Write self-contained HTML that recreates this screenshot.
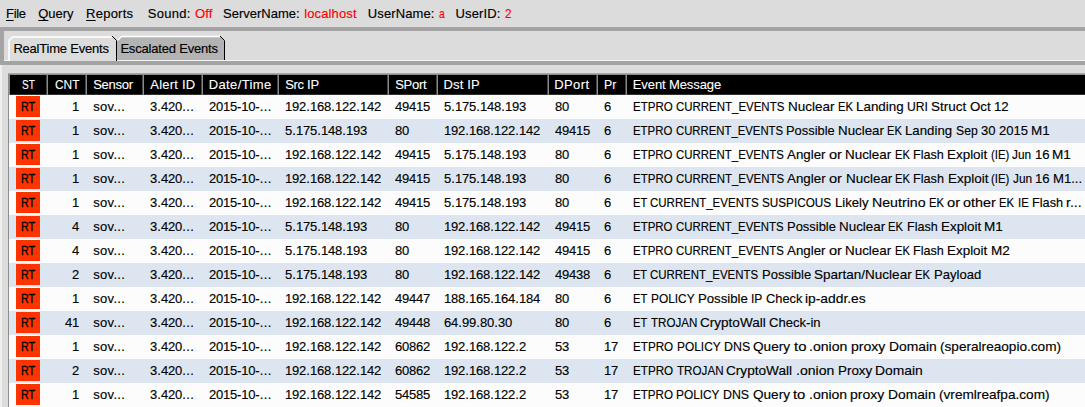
<!DOCTYPE html>
<html><head><meta charset="utf-8"><style>
html,body{margin:0;padding:0;width:1085px;height:407px;overflow:hidden;background:#dcdcdc;position:relative;font-family:"Liberation Sans", sans-serif;font-size:13px;}
.t{position:absolute;white-space:pre;line-height:15px;-webkit-text-stroke:0.15px currentColor;}
.t u{text-decoration:underline;text-underline-offset:2px;}
.n i{font-style:normal;display:inline-block;text-align:center;} .n .d{width:7px} .n .p{width:4px} .n .h{width:4.3px}
.band{position:absolute;background:#a3a3a3;}
.row{position:absolute;left:9px;width:1076px;height:24px;}
.rt{position:absolute;left:16px;width:24px;height:21px;background:#ff3300;}
.sep{position:absolute;top:75px;width:2px;height:20px;background:linear-gradient(90deg,#484848 50%,#8a8a8a 50%);}
</style></head><body>
<div class="band" style="left:0;top:27px;width:1085px;height:4px"></div>
<div class="band" style="left:0;top:27px;width:4px;height:38px"></div>
<div class="band" style="left:0;top:61px;width:1085px;height:4px"></div>
<div style="position:absolute;left:0;top:65px;width:2px;height:342px;background:#eeeeee"></div>
<div style="position:absolute;left:4px;top:60px;width:1081px;height:1px;background:#f4f4f4"></div>
<svg style="position:absolute;left:0;top:0" width="240" height="62">
  <path d="M8,61 V40 L12,36 H112 L116,40 V61 Z" fill="#dcdcdc"/>
  <path d="M9,61 V40.5 L12.5,37 H111.5" fill="none" stroke="#f8f8f8" stroke-width="2"/>
  <path d="M112,36 L116.5,40.5 V61" fill="none" stroke="#000" stroke-width="1"/>
  <path d="M117,60 V40 L121,36 H220 L224,40 V60 Z" fill="#b3b3b3"/>
  <path d="M117.5,40.5 L121.5,36.5 H220" fill="none" stroke="#ffffff" stroke-width="1.3"/>
  <path d="M220,36 L224.5,40.5 V60" fill="none" stroke="#000" stroke-width="1"/>
</svg>
<!-- table frame -->
<div style="position:absolute;left:8px;top:73px;width:1077px;height:334px;background:#8c8c8c"></div>
<div style="position:absolute;left:8px;top:73px;width:1077px;height:1px;background:#a8a8a8"></div>
<div style="position:absolute;left:10px;top:75px;width:1075px;height:20px;background:linear-gradient(#000 19px,#303030 19px)"></div>
<div class="sep" style="left:46px"></div><div class="sep" style="left:85px"></div><div class="sep" style="left:142px"></div><div class="sep" style="left:201px"></div><div class="sep" style="left:277px"></div><div class="sep" style="left:387px"></div><div class="sep" style="left:436px"></div><div class="sep" style="left:547px"></div><div class="sep" style="left:596px"></div><div class="sep" style="left:625px"></div>
<div class="row" style="top:95px;background:#fcfcfc"></div><div class="row" style="top:95px;height:1px;background:#fff"></div><div class="rt" style="top:96px"></div><div class="row" style="top:119px;background:#dde6f0"></div><div class="rt" style="top:120px"></div><div class="row" style="top:143px;background:#fcfcfc"></div><div class="rt" style="top:144px"></div><div class="row" style="top:167px;background:#dde6f0"></div><div class="rt" style="top:168px"></div><div class="row" style="top:191px;background:#fcfcfc"></div><div class="rt" style="top:192px"></div><div class="row" style="top:215px;background:#dde6f0"></div><div class="rt" style="top:216px"></div><div class="row" style="top:239px;background:#fcfcfc"></div><div class="rt" style="top:240px"></div><div class="row" style="top:263px;background:#dde6f0"></div><div class="rt" style="top:264px"></div><div class="row" style="top:287px;background:#fcfcfc"></div><div class="rt" style="top:288px"></div><div class="row" style="top:311px;background:#dde6f0"></div><div class="rt" style="top:312px"></div><div class="row" style="top:335px;background:#fcfcfc"></div><div class="rt" style="top:336px"></div><div class="row" style="top:359px;background:#dde6f0"></div><div class="rt" style="top:360px"></div><div class="row" style="top:383px;background:#fcfcfc"></div><div class="rt" style="top:384px"></div>
<div class="t" style="top:6px;color:#000;letter-spacing:-0.306px;left:6.00px;"><u>F</u>ile</div><div class="t" style="top:6px;color:#000;letter-spacing:-0.050px;left:38.30px;"><u>Q</u>uery</div><div class="t" style="top:6px;color:#000;letter-spacing:0.230px;left:86.10px;"><u>R</u>eports</div><div class="t" style="top:6px;color:#000;letter-spacing:0.282px;left:147.70px;">Sound:</div><div class="t" style="top:6px;color:#ff0000;left:195.20px;transform:scaleX(1.0121);transform-origin:0 0;">Off</div><div class="t" style="top:6px;color:#000;letter-spacing:-0.007px;left:223.10px;">ServerName:</div><div class="t" style="top:6px;color:#ff0000;letter-spacing:0.125px;left:304.20px;">localhost</div><div class="t" style="top:6px;color:#000;letter-spacing:0.091px;left:367.85px;">UserName:</div><div class="t" style="top:6px;color:#ff0000;left:438.90px;transform:scaleX(0.8000);transform-origin:0 0;">a</div><div class="t" style="top:6px;color:#000;letter-spacing:0.125px;left:455.60px;">UserID:</div><div class="t" style="top:6px;color:#ff0000;left:505.30px;transform:scaleX(0.9000);transform-origin:0 0;">2</div><div class="t" style="top:41px;color:#000;letter-spacing:-0.214px;left:13.40px;">RealTime Events</div><div class="t" style="top:41px;color:#000;letter-spacing:-0.190px;left:120.40px;">Escalated Events</div><div class="t" style="top:77px;color:#fff;-webkit-text-stroke:0.1px #fff;left:21.50px;transform:scaleX(0.7798);transform-origin:0 0;">ST</div><div class="t" style="top:77px;color:#fff;-webkit-text-stroke:0.1px #fff;left:54.50px;transform:scaleX(0.9150);transform-origin:0 0;">CNT</div><div class="t" style="top:77px;color:#fff;-webkit-text-stroke:0.1px #fff;letter-spacing:-0.252px;left:93.20px;">Sensor</div><div class="t" style="top:77px;color:#fff;-webkit-text-stroke:0.1px #fff;letter-spacing:0.221px;left:150.30px;">Alert ID</div><div class="t" style="top:77px;color:#fff;-webkit-text-stroke:0.1px #fff;letter-spacing:0.382px;left:208.70px;">Date/Time</div><div class="t" style="top:77px;color:#fff;-webkit-text-stroke:0.1px #fff;letter-spacing:-0.305px;left:285.20px;">Src IP</div><div class="t" style="top:77px;color:#fff;-webkit-text-stroke:0.1px #fff;letter-spacing:-0.250px;left:395.20px;">SPort</div><div class="t" style="top:77px;color:#fff;-webkit-text-stroke:0.1px #fff;letter-spacing:0.155px;left:443.50px;">Dst IP</div><div class="t" style="top:77px;color:#fff;-webkit-text-stroke:0.1px #fff;letter-spacing:0.395px;left:554.20px;">DPort</div><div class="t" style="top:77px;color:#fff;-webkit-text-stroke:0.1px #fff;left:603.65px;transform:scaleX(0.9471);transform-origin:0 0;">Pr</div><div class="t" style="top:77px;color:#fff;-webkit-text-stroke:0.1px #fff;letter-spacing:-0.106px;left:632.80px;">Event Message</div><div class="t" style="top:99px;color:#000;-webkit-text-stroke:0.3px #000;left:21.48px;transform:scaleX(0.8234);transform-origin:0 0;">RT</div><div class="t" style="top:99px;color:#000;letter-spacing:0.282px;left:93.30px;">sov...</div><div class="t" style="top:99px;left:633.00px;transform:scaleX(0.8875);transform-origin:0 0">ETPRO</div><div class="t" style="top:99px;left:676.08px;transform:scaleX(0.8820);transform-origin:0 0">CURRENT_EVENTS</div><div class="t" style="top:99px;left:787.72px;transform:scaleX(1.0372);transform-origin:0 0">Nuclear</div><div class="t" style="top:99px;left:837.51px;transform:scaleX(0.8654);transform-origin:0 0">EK</div><div class="t" style="top:99px;left:855.85px;transform:scaleX(1.0298);transform-origin:0 0">Landing</div><div class="t" style="top:99px;left:906.83px;transform:scaleX(0.9333);transform-origin:0 0">URI</div><div class="t" style="top:99px;left:931.06px;transform:scaleX(1.0363);transform-origin:0 0">Struct</div><div class="t" style="top:99px;left:969.57px;transform:scaleX(1.0198);transform-origin:0 0">Oct</div><div class="t" style="top:99px;left:993.53px;transform:scaleX(1.0144);transform-origin:0 0">12</div><div class="t" style="top:123px;color:#000;-webkit-text-stroke:0.3px #000;left:21.48px;transform:scaleX(0.8234);transform-origin:0 0;">RT</div><div class="t" style="top:123px;color:#000;letter-spacing:0.282px;left:93.30px;">sov...</div><div class="t" style="top:123px;left:633.00px;transform:scaleX(0.8774);transform-origin:0 0">ETPRO</div><div class="t" style="top:123px;left:675.59px;transform:scaleX(0.8720);transform-origin:0 0">CURRENT_EVENTS</div><div class="t" style="top:123px;left:785.96px;transform:scaleX(0.9910);transform-origin:0 0">Possible</div><div class="t" style="top:123px;left:837.94px;transform:scaleX(1.0254);transform-origin:0 0">Nuclear</div><div class="t" style="top:123px;left:887.17px;transform:scaleX(0.8555);transform-origin:0 0">EK</div><div class="t" style="top:123px;left:905.30px;transform:scaleX(1.0180);transform-origin:0 0">Landing</div><div class="t" style="top:123px;left:955.69px;transform:scaleX(0.9390);transform-origin:0 0">Sep</div><div class="t" style="top:123px;left:980.71px;transform:scaleX(1.0029);transform-origin:0 0">30</div><div class="t" style="top:123px;left:998.50px;transform:scaleX(1.0029);transform-origin:0 0">2015</div><div class="t" style="top:123px;left:1030.80px;transform:scaleX(1.0355);transform-origin:0 0">M1</div><div class="t" style="top:147px;color:#000;-webkit-text-stroke:0.3px #000;left:21.48px;transform:scaleX(0.8234);transform-origin:0 0;">RT</div><div class="t" style="top:147px;color:#000;letter-spacing:0.282px;left:93.30px;">sov...</div><div class="t" style="top:147px;left:633.00px;transform:scaleX(0.8833);transform-origin:0 0">ETPRO</div><div class="t" style="top:147px;left:675.87px;transform:scaleX(0.8778);transform-origin:0 0">CURRENT_EVENTS</div><div class="t" style="top:147px;left:786.98px;transform:scaleX(1.0248);transform-origin:0 0">Angler</div><div class="t" style="top:147px;left:828.81px;transform:scaleX(1.1179);transform-origin:0 0">or</div><div class="t" style="top:147px;left:845.04px;transform:scaleX(1.0322);transform-origin:0 0">Nuclear</div><div class="t" style="top:147px;left:894.60px;transform:scaleX(0.8612);transform-origin:0 0">EK</div><div class="t" style="top:147px;left:912.85px;transform:scaleX(0.9702);transform-origin:0 0">Flash</div><div class="t" style="top:147px;left:947.01px;transform:scaleX(1.0325);transform-origin:0 0">Exploit</div><div class="t" style="top:147px;left:990.61px;transform:scaleX(0.8710);transform-origin:0 0">(IE)</div><div class="t" style="top:147px;left:1012.16px;transform:scaleX(0.9103);transform-origin:0 0">Jun</div><div class="t" style="top:147px;left:1034.56px;transform:scaleX(1.0096);transform-origin:0 0">16</div><div class="t" style="top:147px;left:1052.48px;transform:scaleX(1.0424);transform-origin:0 0">M1</div><div class="t" style="top:171px;color:#000;-webkit-text-stroke:0.3px #000;left:21.48px;transform:scaleX(0.8234);transform-origin:0 0;">RT</div><div class="t" style="top:171px;color:#000;letter-spacing:0.282px;left:93.30px;">sov...</div><div class="t" style="top:171px;left:633.00px;transform:scaleX(0.8853);transform-origin:0 0">ETPRO</div><div class="t" style="top:171px;left:675.97px;transform:scaleX(0.8798);transform-origin:0 0">CURRENT_EVENTS</div><div class="t" style="top:171px;left:787.33px;transform:scaleX(1.0271);transform-origin:0 0">Angler</div><div class="t" style="top:171px;left:829.25px;transform:scaleX(1.1204);transform-origin:0 0">or</div><div class="t" style="top:171px;left:845.52px;transform:scaleX(1.0345);transform-origin:0 0">Nuclear</div><div class="t" style="top:171px;left:895.19px;transform:scaleX(0.8631);transform-origin:0 0">EK</div><div class="t" style="top:171px;left:913.48px;transform:scaleX(0.9724);transform-origin:0 0">Flash</div><div class="t" style="top:171px;left:947.71px;transform:scaleX(1.0348);transform-origin:0 0">Exploit</div><div class="t" style="top:171px;left:991.41px;transform:scaleX(0.8729);transform-origin:0 0">(IE)</div><div class="t" style="top:171px;left:1013.02px;transform:scaleX(0.9124);transform-origin:0 0">Jun</div><div class="t" style="top:171px;left:1035.46px;transform:scaleX(1.0118);transform-origin:0 0">16</div><div class="t" style="top:171px;left:1053.42px;transform:scaleX(1.0065);transform-origin:0 0">M1...</div><div class="t" style="top:195px;color:#000;-webkit-text-stroke:0.3px #000;left:21.48px;transform:scaleX(0.8234);transform-origin:0 0;">RT</div><div class="t" style="top:195px;color:#000;letter-spacing:0.282px;left:93.30px;">sov...</div><div class="t" style="top:195px;left:633.00px;transform:scaleX(0.8516);transform-origin:0 0">ET</div><div class="t" style="top:195px;left:650.49px;transform:scaleX(0.8846);transform-origin:0 0">CURRENT_EVENTS</div><div class="t" style="top:195px;left:762.46px;transform:scaleX(0.9025);transform-origin:0 0">SUSPICOUS</div><div class="t" style="top:195px;left:834.91px;transform:scaleX(1.0106);transform-origin:0 0">Likely</div><div class="t" style="top:195px;left:871.84px;transform:scaleX(1.0893);transform-origin:0 0">Neutrino</div><div class="t" style="top:195px;left:928.70px;transform:scaleX(0.8679);transform-origin:0 0">EK</div><div class="t" style="top:195px;left:947.10px;transform:scaleX(1.1265);transform-origin:0 0">or</div><div class="t" style="top:195px;left:963.46px;transform:scaleX(1.1028);transform-origin:0 0">other</div><div class="t" style="top:195px;left:999.48px;transform:scaleX(0.8679);transform-origin:0 0">EK</div><div class="t" style="top:195px;left:1017.87px;transform:scaleX(0.8745);transform-origin:0 0">IE</div><div class="t" style="top:195px;left:1031.95px;transform:scaleX(0.9777);transform-origin:0 0">Flash</div><div class="t" style="top:195px;left:1066.38px;transform:scaleX(1.0744);transform-origin:0 0">r...</div><div class="t" style="top:219px;color:#000;-webkit-text-stroke:0.3px #000;left:21.48px;transform:scaleX(0.8234);transform-origin:0 0;">RT</div><div class="t" style="top:219px;color:#000;letter-spacing:0.282px;left:93.30px;">sov...</div><div class="t" style="top:219px;left:633.00px;transform:scaleX(0.8819);transform-origin:0 0">ETPRO</div><div class="t" style="top:219px;left:675.80px;transform:scaleX(0.8764);transform-origin:0 0">CURRENT_EVENTS</div><div class="t" style="top:219px;left:786.73px;transform:scaleX(0.9960);transform-origin:0 0">Possible</div><div class="t" style="top:219px;left:838.98px;transform:scaleX(1.0305);transform-origin:0 0">Nuclear</div><div class="t" style="top:219px;left:888.45px;transform:scaleX(0.8598);transform-origin:0 0">EK</div><div class="t" style="top:219px;left:906.67px;transform:scaleX(0.9686);transform-origin:0 0">Flash</div><div class="t" style="top:219px;left:940.78px;transform:scaleX(1.0308);transform-origin:0 0">Exploit</div><div class="t" style="top:219px;left:984.31px;transform:scaleX(1.0407);transform-origin:0 0">M1</div><div class="t" style="top:243px;color:#000;-webkit-text-stroke:0.3px #000;left:21.48px;transform:scaleX(0.8234);transform-origin:0 0;">RT</div><div class="t" style="top:243px;color:#000;letter-spacing:0.282px;left:93.30px;">sov...</div><div class="t" style="top:243px;left:633.00px;transform:scaleX(0.8835);transform-origin:0 0">ETPRO</div><div class="t" style="top:243px;left:675.88px;transform:scaleX(0.8780);transform-origin:0 0">CURRENT_EVENTS</div><div class="t" style="top:243px;left:787.01px;transform:scaleX(1.0250);transform-origin:0 0">Angler</div><div class="t" style="top:243px;left:828.84px;transform:scaleX(1.1181);transform-origin:0 0">or</div><div class="t" style="top:243px;left:845.08px;transform:scaleX(1.0324);transform-origin:0 0">Nuclear</div><div class="t" style="top:243px;left:894.64px;transform:scaleX(0.8614);transform-origin:0 0">EK</div><div class="t" style="top:243px;left:912.90px;transform:scaleX(0.9704);transform-origin:0 0">Flash</div><div class="t" style="top:243px;left:947.06px;transform:scaleX(1.0326);transform-origin:0 0">Exploit</div><div class="t" style="top:243px;left:990.67px;transform:scaleX(1.0426);transform-origin:0 0">M2</div><div class="t" style="top:267px;color:#000;-webkit-text-stroke:0.3px #000;left:21.48px;transform:scaleX(0.8234);transform-origin:0 0;">RT</div><div class="t" style="top:267px;color:#000;letter-spacing:0.282px;left:93.30px;">sov...</div><div class="t" style="top:267px;left:633.00px;transform:scaleX(0.8475);transform-origin:0 0">ET</div><div class="t" style="top:267px;left:650.40px;transform:scaleX(0.8804);transform-origin:0 0">CURRENT_EVENTS</div><div class="t" style="top:267px;left:761.84px;transform:scaleX(1.0005);transform-origin:0 0">Possible</div><div class="t" style="top:267px;left:814.33px;transform:scaleX(1.0395);transform-origin:0 0">Spartan/Nuclear</div><div class="t" style="top:267px;left:915.30px;transform:scaleX(0.8638);transform-origin:0 0">EK</div><div class="t" style="top:267px;left:933.61px;transform:scaleX(1.0046);transform-origin:0 0">Payload</div><div class="t" style="top:291px;color:#000;-webkit-text-stroke:0.3px #000;left:21.48px;transform:scaleX(0.8234);transform-origin:0 0;">RT</div><div class="t" style="top:291px;color:#000;letter-spacing:0.282px;left:93.30px;">sov...</div><div class="t" style="top:291px;left:633.00px;transform:scaleX(0.8576);transform-origin:0 0">ET</div><div class="t" style="top:291px;left:650.61px;transform:scaleX(0.9155);transform-origin:0 0">POLICY</div><div class="t" style="top:291px;left:697.63px;transform:scaleX(1.0124);transform-origin:0 0">Possible</div><div class="t" style="top:291px;left:750.74px;transform:scaleX(0.9291);transform-origin:0 0">IP</div><div class="t" style="top:291px;left:765.52px;transform:scaleX(0.9868);transform-origin:0 0">Check</div><div class="t" style="top:291px;left:805.25px;transform:scaleX(1.0624);transform-origin:0 0">ip-addr.es</div><div class="t" style="top:315px;color:#000;-webkit-text-stroke:0.3px #000;left:21.48px;transform:scaleX(0.8234);transform-origin:0 0;">RT</div><div class="t" style="top:315px;color:#000;letter-spacing:0.282px;left:93.30px;">sov...</div><div class="t" style="top:315px;left:633.00px;transform:scaleX(0.8542);transform-origin:0 0">ET</div><div class="t" style="top:315px;left:650.54px;transform:scaleX(0.8919);transform-origin:0 0">TROJAN</div><div class="t" style="top:315px;left:700.28px;transform:scaleX(1.0418);transform-origin:0 0">CryptoWall</div><div class="t" style="top:315px;left:769.35px;transform:scaleX(1.0050);transform-origin:0 0">Check-in</div><div class="t" style="top:339px;color:#000;-webkit-text-stroke:0.3px #000;left:21.48px;transform:scaleX(0.8234);transform-origin:0 0;">RT</div><div class="t" style="top:339px;color:#000;letter-spacing:0.282px;left:93.30px;">sov...</div><div class="t" style="top:339px;left:633.00px;transform:scaleX(0.8967);transform-origin:0 0">ETPRO</div><div class="t" style="top:339px;left:676.52px;transform:scaleX(0.9158);transform-origin:0 0">POLICY</div><div class="t" style="top:339px;left:723.56px;transform:scaleX(0.9547);transform-origin:0 0">DNS</div><div class="t" style="top:339px;left:753.13px;transform:scaleX(1.0484);transform-origin:0 0">Query</div><div class="t" style="top:339px;left:793.61px;transform:scaleX(1.1440);transform-origin:0 0">to</div><div class="t" style="top:339px;left:809.38px;transform:scaleX(1.0810);transform-origin:0 0">.onion</div><div class="t" style="top:339px;left:851.03px;transform:scaleX(1.0807);transform-origin:0 0">proxy</div><div class="t" style="top:339px;left:888.76px;transform:scaleX(1.0664);transform-origin:0 0">Domain</div><div class="t" style="top:339px;left:939.89px;transform:scaleX(1.0468);transform-origin:0 0">(speralreaopio.com)</div><div class="t" style="top:363px;color:#000;-webkit-text-stroke:0.3px #000;left:21.48px;transform:scaleX(0.8234);transform-origin:0 0;">RT</div><div class="t" style="top:363px;color:#000;letter-spacing:0.282px;left:93.30px;">sov...</div><div class="t" style="top:363px;left:633.00px;transform:scaleX(0.8969);transform-origin:0 0">ETPRO</div><div class="t" style="top:363px;left:676.53px;transform:scaleX(0.8959);transform-origin:0 0">TROJAN</div><div class="t" style="top:363px;left:726.49px;transform:scaleX(1.0464);transform-origin:0 0">CryptoWall</div><div class="t" style="top:363px;left:795.87px;transform:scaleX(1.0812);transform-origin:0 0">.onion</div><div class="t" style="top:363px;left:837.53px;transform:scaleX(1.0298);transform-origin:0 0">Proxy</div><div class="t" style="top:363px;left:875.12px;transform:scaleX(1.0666);transform-origin:0 0">Domain</div><div class="t" style="top:387px;color:#000;-webkit-text-stroke:0.3px #000;left:21.48px;transform:scaleX(0.8234);transform-origin:0 0;">RT</div><div class="t" style="top:387px;color:#000;letter-spacing:0.282px;left:93.30px;">sov...</div><div class="t" style="top:387px;left:633.00px;transform:scaleX(0.8937);transform-origin:0 0">ETPRO</div><div class="t" style="top:387px;left:676.38px;transform:scaleX(0.9128);transform-origin:0 0">POLICY</div><div class="t" style="top:387px;left:723.26px;transform:scaleX(0.9515);transform-origin:0 0">DNS</div><div class="t" style="top:387px;left:752.73px;transform:scaleX(1.0449);transform-origin:0 0">Query</div><div class="t" style="top:387px;left:793.08px;transform:scaleX(1.1402);transform-origin:0 0">to</div><div class="t" style="top:387px;left:808.79px;transform:scaleX(1.0775);transform-origin:0 0">.onion</div><div class="t" style="top:387px;left:850.31px;transform:scaleX(1.0771);transform-origin:0 0">proxy</div><div class="t" style="top:387px;left:887.91px;transform:scaleX(1.0629);transform-origin:0 0">Domain</div><div class="t" style="top:387px;left:938.88px;transform:scaleX(1.0480);transform-origin:0 0">(vremlreafpa.com)</div><div class="t n" style="top:99px;left:72px"><i class="d">1</i></div><div class="t n" style="top:99px;left:150px"><i class="d">3</i><i class="p">.</i><i class="d">4</i><i class="d">2</i><i class="d">0</i><i class="p">.</i><i class="p">.</i><i class="p">.</i></div><div class="t n" style="top:99px;left:209px"><i class="d">2</i><i class="d">0</i><i class="d">1</i><i class="d">5</i><i class="h">-</i><i class="d">1</i><i class="d">0</i><i class="h">-</i><i class="p">.</i><i class="p">.</i><i class="p">.</i></div><div class="t n" style="top:99px;left:285px"><i class="d">1</i><i class="d">9</i><i class="d">2</i><i class="p">.</i><i class="d">1</i><i class="d">6</i><i class="d">8</i><i class="p">.</i><i class="d">1</i><i class="d">2</i><i class="d">2</i><i class="p">.</i><i class="d">1</i><i class="d">4</i><i class="d">2</i></div><div class="t n" style="top:99px;left:395px"><i class="d">4</i><i class="d">9</i><i class="d">4</i><i class="d">1</i><i class="d">5</i></div><div class="t n" style="top:99px;left:444px"><i class="d">5</i><i class="p">.</i><i class="d">1</i><i class="d">7</i><i class="d">5</i><i class="p">.</i><i class="d">1</i><i class="d">4</i><i class="d">8</i><i class="p">.</i><i class="d">1</i><i class="d">9</i><i class="d">3</i></div><div class="t n" style="top:99px;left:555px"><i class="d">8</i><i class="d">0</i></div><div class="t n" style="top:99px;left:604px"><i class="d">6</i></div><div class="t n" style="top:123px;left:72px"><i class="d">1</i></div><div class="t n" style="top:123px;left:150px"><i class="d">3</i><i class="p">.</i><i class="d">4</i><i class="d">2</i><i class="d">0</i><i class="p">.</i><i class="p">.</i><i class="p">.</i></div><div class="t n" style="top:123px;left:209px"><i class="d">2</i><i class="d">0</i><i class="d">1</i><i class="d">5</i><i class="h">-</i><i class="d">1</i><i class="d">0</i><i class="h">-</i><i class="p">.</i><i class="p">.</i><i class="p">.</i></div><div class="t n" style="top:123px;left:285px"><i class="d">5</i><i class="p">.</i><i class="d">1</i><i class="d">7</i><i class="d">5</i><i class="p">.</i><i class="d">1</i><i class="d">4</i><i class="d">8</i><i class="p">.</i><i class="d">1</i><i class="d">9</i><i class="d">3</i></div><div class="t n" style="top:123px;left:395px"><i class="d">8</i><i class="d">0</i></div><div class="t n" style="top:123px;left:444px"><i class="d">1</i><i class="d">9</i><i class="d">2</i><i class="p">.</i><i class="d">1</i><i class="d">6</i><i class="d">8</i><i class="p">.</i><i class="d">1</i><i class="d">2</i><i class="d">2</i><i class="p">.</i><i class="d">1</i><i class="d">4</i><i class="d">2</i></div><div class="t n" style="top:123px;left:555px"><i class="d">4</i><i class="d">9</i><i class="d">4</i><i class="d">1</i><i class="d">5</i></div><div class="t n" style="top:123px;left:604px"><i class="d">6</i></div><div class="t n" style="top:147px;left:72px"><i class="d">1</i></div><div class="t n" style="top:147px;left:150px"><i class="d">3</i><i class="p">.</i><i class="d">4</i><i class="d">2</i><i class="d">0</i><i class="p">.</i><i class="p">.</i><i class="p">.</i></div><div class="t n" style="top:147px;left:209px"><i class="d">2</i><i class="d">0</i><i class="d">1</i><i class="d">5</i><i class="h">-</i><i class="d">1</i><i class="d">0</i><i class="h">-</i><i class="p">.</i><i class="p">.</i><i class="p">.</i></div><div class="t n" style="top:147px;left:285px"><i class="d">1</i><i class="d">9</i><i class="d">2</i><i class="p">.</i><i class="d">1</i><i class="d">6</i><i class="d">8</i><i class="p">.</i><i class="d">1</i><i class="d">2</i><i class="d">2</i><i class="p">.</i><i class="d">1</i><i class="d">4</i><i class="d">2</i></div><div class="t n" style="top:147px;left:395px"><i class="d">4</i><i class="d">9</i><i class="d">4</i><i class="d">1</i><i class="d">5</i></div><div class="t n" style="top:147px;left:444px"><i class="d">5</i><i class="p">.</i><i class="d">1</i><i class="d">7</i><i class="d">5</i><i class="p">.</i><i class="d">1</i><i class="d">4</i><i class="d">8</i><i class="p">.</i><i class="d">1</i><i class="d">9</i><i class="d">3</i></div><div class="t n" style="top:147px;left:555px"><i class="d">8</i><i class="d">0</i></div><div class="t n" style="top:147px;left:604px"><i class="d">6</i></div><div class="t n" style="top:171px;left:72px"><i class="d">1</i></div><div class="t n" style="top:171px;left:150px"><i class="d">3</i><i class="p">.</i><i class="d">4</i><i class="d">2</i><i class="d">0</i><i class="p">.</i><i class="p">.</i><i class="p">.</i></div><div class="t n" style="top:171px;left:209px"><i class="d">2</i><i class="d">0</i><i class="d">1</i><i class="d">5</i><i class="h">-</i><i class="d">1</i><i class="d">0</i><i class="h">-</i><i class="p">.</i><i class="p">.</i><i class="p">.</i></div><div class="t n" style="top:171px;left:285px"><i class="d">1</i><i class="d">9</i><i class="d">2</i><i class="p">.</i><i class="d">1</i><i class="d">6</i><i class="d">8</i><i class="p">.</i><i class="d">1</i><i class="d">2</i><i class="d">2</i><i class="p">.</i><i class="d">1</i><i class="d">4</i><i class="d">2</i></div><div class="t n" style="top:171px;left:395px"><i class="d">4</i><i class="d">9</i><i class="d">4</i><i class="d">1</i><i class="d">5</i></div><div class="t n" style="top:171px;left:444px"><i class="d">5</i><i class="p">.</i><i class="d">1</i><i class="d">7</i><i class="d">5</i><i class="p">.</i><i class="d">1</i><i class="d">4</i><i class="d">8</i><i class="p">.</i><i class="d">1</i><i class="d">9</i><i class="d">3</i></div><div class="t n" style="top:171px;left:555px"><i class="d">8</i><i class="d">0</i></div><div class="t n" style="top:171px;left:604px"><i class="d">6</i></div><div class="t n" style="top:195px;left:72px"><i class="d">1</i></div><div class="t n" style="top:195px;left:150px"><i class="d">3</i><i class="p">.</i><i class="d">4</i><i class="d">2</i><i class="d">0</i><i class="p">.</i><i class="p">.</i><i class="p">.</i></div><div class="t n" style="top:195px;left:209px"><i class="d">2</i><i class="d">0</i><i class="d">1</i><i class="d">5</i><i class="h">-</i><i class="d">1</i><i class="d">0</i><i class="h">-</i><i class="p">.</i><i class="p">.</i><i class="p">.</i></div><div class="t n" style="top:195px;left:285px"><i class="d">1</i><i class="d">9</i><i class="d">2</i><i class="p">.</i><i class="d">1</i><i class="d">6</i><i class="d">8</i><i class="p">.</i><i class="d">1</i><i class="d">2</i><i class="d">2</i><i class="p">.</i><i class="d">1</i><i class="d">4</i><i class="d">2</i></div><div class="t n" style="top:195px;left:395px"><i class="d">4</i><i class="d">9</i><i class="d">4</i><i class="d">1</i><i class="d">5</i></div><div class="t n" style="top:195px;left:444px"><i class="d">5</i><i class="p">.</i><i class="d">1</i><i class="d">7</i><i class="d">5</i><i class="p">.</i><i class="d">1</i><i class="d">4</i><i class="d">8</i><i class="p">.</i><i class="d">1</i><i class="d">9</i><i class="d">3</i></div><div class="t n" style="top:195px;left:555px"><i class="d">8</i><i class="d">0</i></div><div class="t n" style="top:195px;left:604px"><i class="d">6</i></div><div class="t n" style="top:219px;left:72px"><i class="d">4</i></div><div class="t n" style="top:219px;left:150px"><i class="d">3</i><i class="p">.</i><i class="d">4</i><i class="d">2</i><i class="d">0</i><i class="p">.</i><i class="p">.</i><i class="p">.</i></div><div class="t n" style="top:219px;left:209px"><i class="d">2</i><i class="d">0</i><i class="d">1</i><i class="d">5</i><i class="h">-</i><i class="d">1</i><i class="d">0</i><i class="h">-</i><i class="p">.</i><i class="p">.</i><i class="p">.</i></div><div class="t n" style="top:219px;left:285px"><i class="d">5</i><i class="p">.</i><i class="d">1</i><i class="d">7</i><i class="d">5</i><i class="p">.</i><i class="d">1</i><i class="d">4</i><i class="d">8</i><i class="p">.</i><i class="d">1</i><i class="d">9</i><i class="d">3</i></div><div class="t n" style="top:219px;left:395px"><i class="d">8</i><i class="d">0</i></div><div class="t n" style="top:219px;left:444px"><i class="d">1</i><i class="d">9</i><i class="d">2</i><i class="p">.</i><i class="d">1</i><i class="d">6</i><i class="d">8</i><i class="p">.</i><i class="d">1</i><i class="d">2</i><i class="d">2</i><i class="p">.</i><i class="d">1</i><i class="d">4</i><i class="d">2</i></div><div class="t n" style="top:219px;left:555px"><i class="d">4</i><i class="d">9</i><i class="d">4</i><i class="d">1</i><i class="d">5</i></div><div class="t n" style="top:219px;left:604px"><i class="d">6</i></div><div class="t n" style="top:243px;left:72px"><i class="d">4</i></div><div class="t n" style="top:243px;left:150px"><i class="d">3</i><i class="p">.</i><i class="d">4</i><i class="d">2</i><i class="d">0</i><i class="p">.</i><i class="p">.</i><i class="p">.</i></div><div class="t n" style="top:243px;left:209px"><i class="d">2</i><i class="d">0</i><i class="d">1</i><i class="d">5</i><i class="h">-</i><i class="d">1</i><i class="d">0</i><i class="h">-</i><i class="p">.</i><i class="p">.</i><i class="p">.</i></div><div class="t n" style="top:243px;left:285px"><i class="d">5</i><i class="p">.</i><i class="d">1</i><i class="d">7</i><i class="d">5</i><i class="p">.</i><i class="d">1</i><i class="d">4</i><i class="d">8</i><i class="p">.</i><i class="d">1</i><i class="d">9</i><i class="d">3</i></div><div class="t n" style="top:243px;left:395px"><i class="d">8</i><i class="d">0</i></div><div class="t n" style="top:243px;left:444px"><i class="d">1</i><i class="d">9</i><i class="d">2</i><i class="p">.</i><i class="d">1</i><i class="d">6</i><i class="d">8</i><i class="p">.</i><i class="d">1</i><i class="d">2</i><i class="d">2</i><i class="p">.</i><i class="d">1</i><i class="d">4</i><i class="d">2</i></div><div class="t n" style="top:243px;left:555px"><i class="d">4</i><i class="d">9</i><i class="d">4</i><i class="d">1</i><i class="d">5</i></div><div class="t n" style="top:243px;left:604px"><i class="d">6</i></div><div class="t n" style="top:267px;left:72px"><i class="d">2</i></div><div class="t n" style="top:267px;left:150px"><i class="d">3</i><i class="p">.</i><i class="d">4</i><i class="d">2</i><i class="d">0</i><i class="p">.</i><i class="p">.</i><i class="p">.</i></div><div class="t n" style="top:267px;left:209px"><i class="d">2</i><i class="d">0</i><i class="d">1</i><i class="d">5</i><i class="h">-</i><i class="d">1</i><i class="d">0</i><i class="h">-</i><i class="p">.</i><i class="p">.</i><i class="p">.</i></div><div class="t n" style="top:267px;left:285px"><i class="d">5</i><i class="p">.</i><i class="d">1</i><i class="d">7</i><i class="d">5</i><i class="p">.</i><i class="d">1</i><i class="d">4</i><i class="d">8</i><i class="p">.</i><i class="d">1</i><i class="d">9</i><i class="d">3</i></div><div class="t n" style="top:267px;left:395px"><i class="d">8</i><i class="d">0</i></div><div class="t n" style="top:267px;left:444px"><i class="d">1</i><i class="d">9</i><i class="d">2</i><i class="p">.</i><i class="d">1</i><i class="d">6</i><i class="d">8</i><i class="p">.</i><i class="d">1</i><i class="d">2</i><i class="d">2</i><i class="p">.</i><i class="d">1</i><i class="d">4</i><i class="d">2</i></div><div class="t n" style="top:267px;left:555px"><i class="d">4</i><i class="d">9</i><i class="d">4</i><i class="d">3</i><i class="d">8</i></div><div class="t n" style="top:267px;left:604px"><i class="d">6</i></div><div class="t n" style="top:291px;left:72px"><i class="d">1</i></div><div class="t n" style="top:291px;left:150px"><i class="d">3</i><i class="p">.</i><i class="d">4</i><i class="d">2</i><i class="d">0</i><i class="p">.</i><i class="p">.</i><i class="p">.</i></div><div class="t n" style="top:291px;left:209px"><i class="d">2</i><i class="d">0</i><i class="d">1</i><i class="d">5</i><i class="h">-</i><i class="d">1</i><i class="d">0</i><i class="h">-</i><i class="p">.</i><i class="p">.</i><i class="p">.</i></div><div class="t n" style="top:291px;left:285px"><i class="d">1</i><i class="d">9</i><i class="d">2</i><i class="p">.</i><i class="d">1</i><i class="d">6</i><i class="d">8</i><i class="p">.</i><i class="d">1</i><i class="d">2</i><i class="d">2</i><i class="p">.</i><i class="d">1</i><i class="d">4</i><i class="d">2</i></div><div class="t n" style="top:291px;left:395px"><i class="d">4</i><i class="d">9</i><i class="d">4</i><i class="d">4</i><i class="d">7</i></div><div class="t n" style="top:291px;left:444px"><i class="d">1</i><i class="d">8</i><i class="d">8</i><i class="p">.</i><i class="d">1</i><i class="d">6</i><i class="d">5</i><i class="p">.</i><i class="d">1</i><i class="d">6</i><i class="d">4</i><i class="p">.</i><i class="d">1</i><i class="d">8</i><i class="d">4</i></div><div class="t n" style="top:291px;left:555px"><i class="d">8</i><i class="d">0</i></div><div class="t n" style="top:291px;left:604px"><i class="d">6</i></div><div class="t n" style="top:315px;left:65px"><i class="d">4</i><i class="d">1</i></div><div class="t n" style="top:315px;left:150px"><i class="d">3</i><i class="p">.</i><i class="d">4</i><i class="d">2</i><i class="d">0</i><i class="p">.</i><i class="p">.</i><i class="p">.</i></div><div class="t n" style="top:315px;left:209px"><i class="d">2</i><i class="d">0</i><i class="d">1</i><i class="d">5</i><i class="h">-</i><i class="d">1</i><i class="d">0</i><i class="h">-</i><i class="p">.</i><i class="p">.</i><i class="p">.</i></div><div class="t n" style="top:315px;left:285px"><i class="d">1</i><i class="d">9</i><i class="d">2</i><i class="p">.</i><i class="d">1</i><i class="d">6</i><i class="d">8</i><i class="p">.</i><i class="d">1</i><i class="d">2</i><i class="d">2</i><i class="p">.</i><i class="d">1</i><i class="d">4</i><i class="d">2</i></div><div class="t n" style="top:315px;left:395px"><i class="d">4</i><i class="d">9</i><i class="d">4</i><i class="d">4</i><i class="d">8</i></div><div class="t n" style="top:315px;left:444px"><i class="d">6</i><i class="d">4</i><i class="p">.</i><i class="d">9</i><i class="d">9</i><i class="p">.</i><i class="d">8</i><i class="d">0</i><i class="p">.</i><i class="d">3</i><i class="d">0</i></div><div class="t n" style="top:315px;left:555px"><i class="d">8</i><i class="d">0</i></div><div class="t n" style="top:315px;left:604px"><i class="d">6</i></div><div class="t n" style="top:339px;left:72px"><i class="d">1</i></div><div class="t n" style="top:339px;left:150px"><i class="d">3</i><i class="p">.</i><i class="d">4</i><i class="d">2</i><i class="d">0</i><i class="p">.</i><i class="p">.</i><i class="p">.</i></div><div class="t n" style="top:339px;left:209px"><i class="d">2</i><i class="d">0</i><i class="d">1</i><i class="d">5</i><i class="h">-</i><i class="d">1</i><i class="d">0</i><i class="h">-</i><i class="p">.</i><i class="p">.</i><i class="p">.</i></div><div class="t n" style="top:339px;left:285px"><i class="d">1</i><i class="d">9</i><i class="d">2</i><i class="p">.</i><i class="d">1</i><i class="d">6</i><i class="d">8</i><i class="p">.</i><i class="d">1</i><i class="d">2</i><i class="d">2</i><i class="p">.</i><i class="d">1</i><i class="d">4</i><i class="d">2</i></div><div class="t n" style="top:339px;left:395px"><i class="d">6</i><i class="d">0</i><i class="d">8</i><i class="d">6</i><i class="d">2</i></div><div class="t n" style="top:339px;left:444px"><i class="d">1</i><i class="d">9</i><i class="d">2</i><i class="p">.</i><i class="d">1</i><i class="d">6</i><i class="d">8</i><i class="p">.</i><i class="d">1</i><i class="d">2</i><i class="d">2</i><i class="p">.</i><i class="d">2</i></div><div class="t n" style="top:339px;left:555px"><i class="d">5</i><i class="d">3</i></div><div class="t n" style="top:339px;left:604px"><i class="d">1</i><i class="d">7</i></div><div class="t n" style="top:363px;left:72px"><i class="d">2</i></div><div class="t n" style="top:363px;left:150px"><i class="d">3</i><i class="p">.</i><i class="d">4</i><i class="d">2</i><i class="d">0</i><i class="p">.</i><i class="p">.</i><i class="p">.</i></div><div class="t n" style="top:363px;left:209px"><i class="d">2</i><i class="d">0</i><i class="d">1</i><i class="d">5</i><i class="h">-</i><i class="d">1</i><i class="d">0</i><i class="h">-</i><i class="p">.</i><i class="p">.</i><i class="p">.</i></div><div class="t n" style="top:363px;left:285px"><i class="d">1</i><i class="d">9</i><i class="d">2</i><i class="p">.</i><i class="d">1</i><i class="d">6</i><i class="d">8</i><i class="p">.</i><i class="d">1</i><i class="d">2</i><i class="d">2</i><i class="p">.</i><i class="d">1</i><i class="d">4</i><i class="d">2</i></div><div class="t n" style="top:363px;left:395px"><i class="d">6</i><i class="d">0</i><i class="d">8</i><i class="d">6</i><i class="d">2</i></div><div class="t n" style="top:363px;left:444px"><i class="d">1</i><i class="d">9</i><i class="d">2</i><i class="p">.</i><i class="d">1</i><i class="d">6</i><i class="d">8</i><i class="p">.</i><i class="d">1</i><i class="d">2</i><i class="d">2</i><i class="p">.</i><i class="d">2</i></div><div class="t n" style="top:363px;left:555px"><i class="d">5</i><i class="d">3</i></div><div class="t n" style="top:363px;left:604px"><i class="d">1</i><i class="d">7</i></div><div class="t n" style="top:387px;left:72px"><i class="d">1</i></div><div class="t n" style="top:387px;left:150px"><i class="d">3</i><i class="p">.</i><i class="d">4</i><i class="d">2</i><i class="d">0</i><i class="p">.</i><i class="p">.</i><i class="p">.</i></div><div class="t n" style="top:387px;left:209px"><i class="d">2</i><i class="d">0</i><i class="d">1</i><i class="d">5</i><i class="h">-</i><i class="d">1</i><i class="d">0</i><i class="h">-</i><i class="p">.</i><i class="p">.</i><i class="p">.</i></div><div class="t n" style="top:387px;left:285px"><i class="d">1</i><i class="d">9</i><i class="d">2</i><i class="p">.</i><i class="d">1</i><i class="d">6</i><i class="d">8</i><i class="p">.</i><i class="d">1</i><i class="d">2</i><i class="d">2</i><i class="p">.</i><i class="d">1</i><i class="d">4</i><i class="d">2</i></div><div class="t n" style="top:387px;left:395px"><i class="d">5</i><i class="d">4</i><i class="d">5</i><i class="d">8</i><i class="d">5</i></div><div class="t n" style="top:387px;left:444px"><i class="d">1</i><i class="d">9</i><i class="d">2</i><i class="p">.</i><i class="d">1</i><i class="d">6</i><i class="d">8</i><i class="p">.</i><i class="d">1</i><i class="d">2</i><i class="d">2</i><i class="p">.</i><i class="d">2</i></div><div class="t n" style="top:387px;left:555px"><i class="d">5</i><i class="d">3</i></div><div class="t n" style="top:387px;left:604px"><i class="d">1</i><i class="d">7</i></div>
</body></html>
